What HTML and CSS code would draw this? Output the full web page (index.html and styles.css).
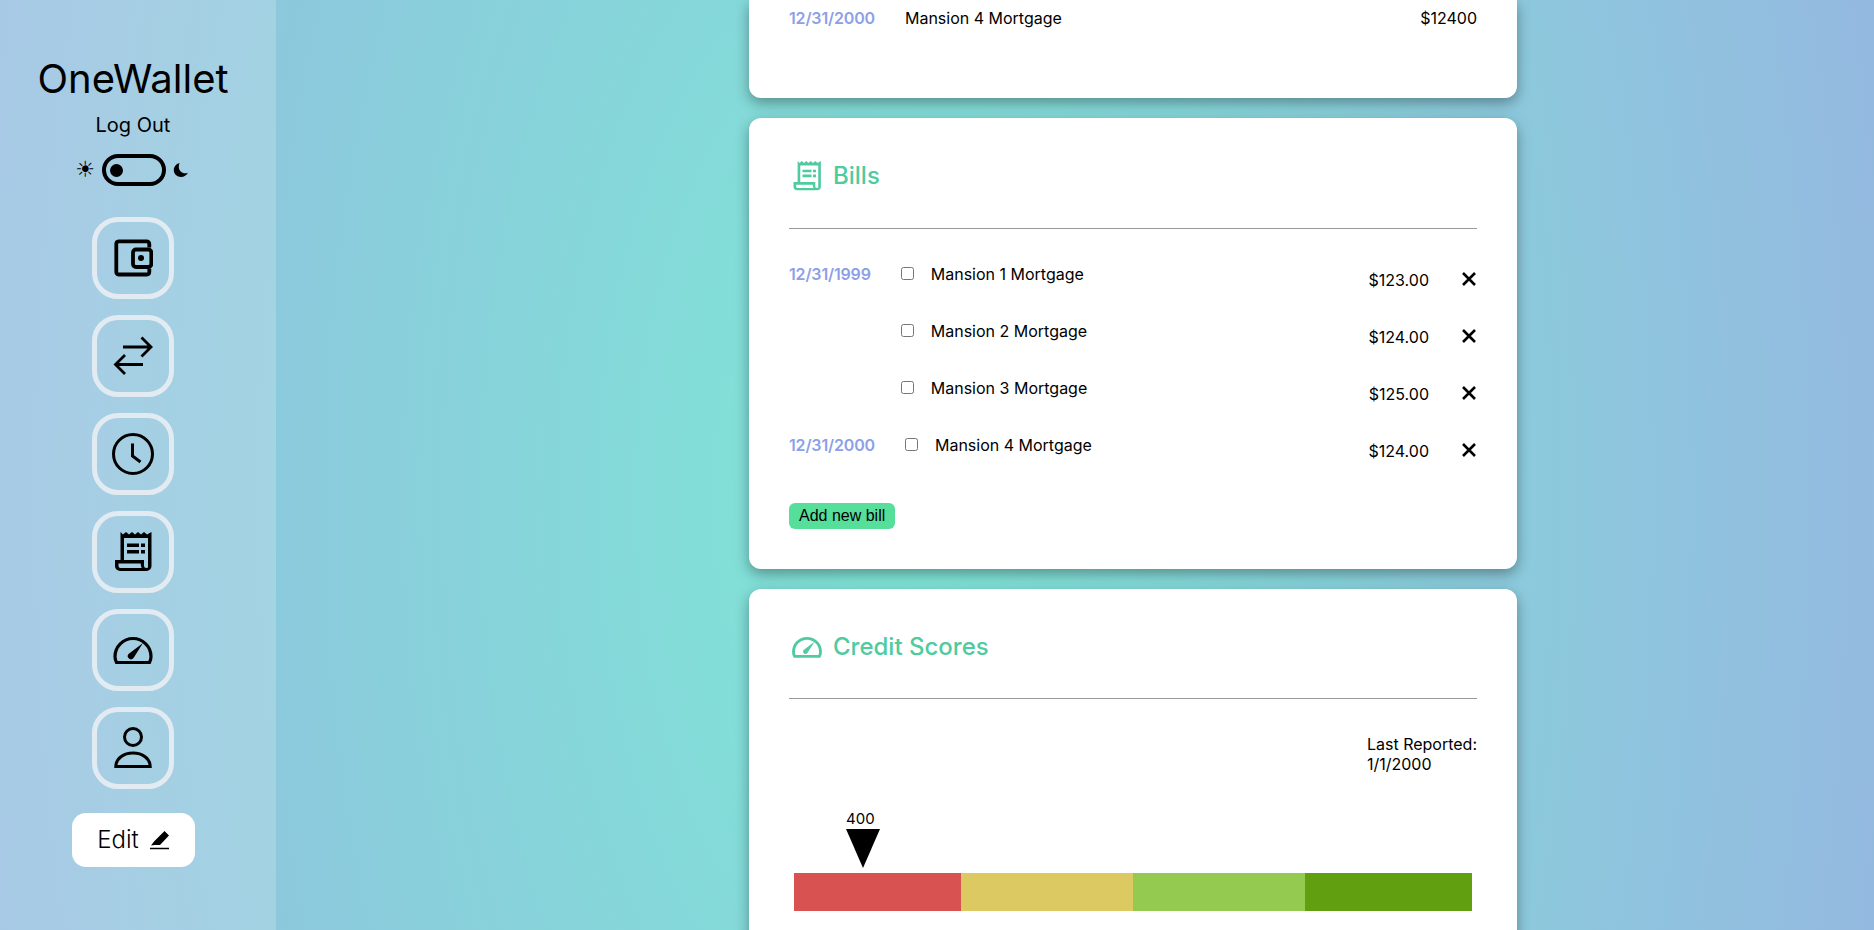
FILE: index.html
```html
<html>
<head>
	<title>OneWallet</title>
	<meta charset="UTF-8" />
	<link rel="stylesheet" href="styles.css">
</head>
<body>
<div class="page">
	<nav class="sidebar">
		<h1 class="logo">OneWallet</h1>
		<a class="logout" href="#">Log Out</a>
		<div class="theme">
			<span class="sun">☀</span>
			<span class="switch"><span class="knob"></span></span>
			<svg class="moon" width="16" height="16" viewBox="0 0 16 16"><path d="M6.5 1C3 2 .8 4.8.8 8c0 3.900 3.200 7 7.200 7 3 0 5.600-1.600 7-4.200-.9.4-1.800.5-2.700.5C8.800 11.300 5.800 8.600 5.800 5c0-1.500.2-2.800.7-4z"/></svg>
		</div>

		<a class="nav-btn" href="#">
			<svg width="40" height="40" viewBox="0 0 40 40" fill="none" stroke="#000" stroke-width="3.800"><path d="M36.300 9.500V6a2.600 2.600 0 0 0-2.600-2.600H5.700A2.600 2.600 0 0 0 3.300 6v28a2.600 2.600 0 0 0 2.400 2.500h28a2.600 2.600 0 0 0 2.600-2.500v-3.500"/><rect x="20" y="11.500" width="18.300" height="17.500" rx="3"/><circle cx="28" cy="20" r="3" fill="#000" stroke="none"/></svg>
		</a>
		<a class="nav-btn" href="#">
			<svg width="40" height="40" viewBox="0 0 40 40" fill="none" stroke="#000" stroke-width="2.800"><path d="M10 11H38M28.500 1.500L38 11L28.500 20.500"/><path d="M30 28.500H2.500M12 19L2.500 28.500L12 38"/></svg>
		</a>
		<a class="nav-btn" href="#">
			<svg width="42" height="42" viewBox="0 0 42 42" fill="none" stroke="#000" stroke-width="3"><circle cx="21" cy="21" r="19.500"/><path d="M20.500 10.500V23L28.500 29"/></svg>
		</a>
		<a class="nav-btn" href="#">
			<svg width="40" height="40" viewBox="0 0 40 40"><path fill-rule="evenodd" d="M7.500 28V0l2.500 2.500 3-2.500 3 2.500 3-2.500 3 2.500 3-2.500 3 2.500 3-2.500 3 2.500 4.500-2.500v34a5 5 0 0 1-5 5H7a5 5 0 0 1-5-5V28zM11 6v22h20v5.500a2.500 2.500 0 0 0 2.500 2.500 1.500 1.500 0 0 0 1.500-2V6zM5.500 31.500V34a2 2 0 0 0 2 2h21.300a5 5 0 0 1-1-3v-1.500z"/><path d="M14 11.500h12v3.500H14zM14 18h12v3.500H14zM28 11.500h4v3.500h-4zM28 18h4v3.500h-4z"/></svg>
		</a>
		<a class="nav-btn" href="#">
			<svg width="40" height="40" viewBox="0 0 40 40"><path fill="none" stroke="#000" stroke-width="3.200" d="M3.500 32.500C2.500 30.500 2 28.500 2 26.500a18 18 0 0 1 36 0c0 2-.5 4-1.500 6z"/><path d="M15.500 24l14.500-11-9.500 15a3.200 3.200 0 0 1-5-4z"/></svg>
		</a>
		<a class="nav-btn" href="#">
			<svg width="40" height="42" viewBox="0 0 40 42" fill="none" stroke="#000" stroke-width="3"><circle cx="20" cy="10" r="8.500"/><path d="M2.800 39.500H37.200C37 31.500 29.500 26 20 26S3 31.500 2.800 39.500z"/></svg>
		</a>

		<button class="edit-btn">Edit
			<svg width="20" height="20" viewBox="0 0 20 20"><path d="M15.500 1L20 5.500 11 15H5.500L2 15.500 5 11.500z"/><path d="M1 18.500h19" stroke="#000" stroke-width="1.500"/></svg>
		</button>
	</nav>

	<main class="content">
		<section class="card card-top">
			<div class="row-group">
				<span class="date">12/31/2000</span>
				<span class="top-name">Mansion 4 Mortgage</span>
				<span class="top-amount">$12400</span>
			</div>
		</section>

		<section class="card">
			<h2 class="card-title">
				<svg width="30" height="30" viewBox="0 0 40 40" fill="#4fcb9f"><path fill-rule="evenodd" d="M7.500 28V0l2.500 2.500 3-2.500 3 2.500 3-2.500 3 2.500 3-2.500 3 2.500 3-2.500 3 2.500 4.500-2.500v34a5 5 0 0 1-5 5H7a5 5 0 0 1-5-5V28zM11 6v22h20v5.500a2.500 2.500 0 0 0 2.500 2.500 1.500 1.500 0 0 0 1.500-2V6zM5.500 31.500V34a2 2 0 0 0 2 2h21.300a5 5 0 0 1-1-3v-1.500z"/><path d="M14 11.500h12v3.500H14zM14 18h12v3.500H14zM28 11.500h4v3.500h-4zM28 18h4v3.500h-4z"/></svg>
				Bills
			</h2>
			<hr class="rule">

			<div class="bill-group">
				<span class="date">12/31/1999</span>
				<div class="bill-rows">
					<div class="bill"><input type="checkbox"><span class="bill-name">Mansion 1 Mortgage</span><span class="bill-amount">$123.00</span><svg class="remove" width="16" height="16" viewBox="0 0 16 16"><path d="M2 2L14 14M14 2L2 14" stroke="#000" stroke-width="2.600"/></svg></div>
					<div class="bill"><input type="checkbox"><span class="bill-name">Mansion 2 Mortgage</span><span class="bill-amount">$124.00</span><svg class="remove" width="16" height="16" viewBox="0 0 16 16"><path d="M2 2L14 14M14 2L2 14" stroke="#000" stroke-width="2.600"/></svg></div>
					<div class="bill"><input type="checkbox"><span class="bill-name">Mansion 3 Mortgage</span><span class="bill-amount">$125.00</span><svg class="remove" width="16" height="16" viewBox="0 0 16 16"><path d="M2 2L14 14M14 2L2 14" stroke="#000" stroke-width="2.600"/></svg></div>
				</div>
			</div>
			<div class="bill-group">
				<span class="date">12/31/2000</span>
				<div class="bill-rows">
					<div class="bill"><input type="checkbox"><span class="bill-name">Mansion 4 Mortgage</span><span class="bill-amount">$124.00</span><svg class="remove" width="16" height="16" viewBox="0 0 16 16"><path d="M2 2L14 14M14 2L2 14" stroke="#000" stroke-width="2.600"/></svg></div>
				</div>
			</div>

			<button class="add-btn">Add new bill</button>
		</section>

		<section class="card card-scores">
			<h2 class="card-title">
				<svg width="30" height="30" viewBox="0 0 40 40" fill="#4fcb9f"><path fill="none" stroke="#4fcb9f" stroke-width="3.800" d="M3.500 32.500C2.500 30.500 2 28.500 2 26.500a18 18 0 0 1 36 0c0 2-.5 4-1.500 6z"/><path d="M15.500 24l14.500-11-9.500 15a3.200 3.200 0 0 1-5-4z"/></svg>
				Credit Scores
			</h2>
			<hr class="rule">

			<div class="reported">Last Reported:<br>1/1/2000</div>

			<div class="marker">
				<span class="marker-value">400</span>
				<svg class="marker-arrow" width="34" height="39" viewBox="0 0 34 39"><path d="M0 0H34L17 39z"/></svg>
			</div>
			<div class="score-bar">
				<span class="seg seg-red"></span>
				<span class="seg seg-yellow"></span>
				<span class="seg seg-light"></span>
				<span class="seg seg-dark"></span>
			</div>
		</section>
	</main>
</div>
</body>
</html>
```

FILE: styles.css
```css
html, body {
	margin: 0;
	height: 100%;
	overflow: hidden;
}

body {
	font: normal 16px/20px Inter, sans-serif;
	color: #000;
	background: radial-gradient(ellipse 1000px 1900px at 900px 500px, #7ee6d6, #94b9e0);
}

a {
	color: inherit;
	text-decoration: none;
}

.page {
	display: flex;
	height: 930px;
}

/* sidebar */
.sidebar {
	width: 266px;
	padding: 0 10px 0 0;
	flex: none;
	display: flex;
	flex-direction: column;
	align-items: center;
	background: rgba(255, 255, 255, .2);
}

.logo {
	margin: 55px 0 0 0;
	font-size: 40px;
	line-height: 48px;
	font-weight: 400;
}

.logout {
	margin-top: 10px;
	font-size: 20px;
	line-height: 24px;
}

.theme {
	margin: 17px 2px 0 0;
	height: 32px;
	display: flex;
	align-items: center;
	gap: 7px;
}

.sun {
	font: 22px/20px "DejaVu Sans", sans-serif;
}

.switch {
	width: 56px;
	height: 24px;
	border: 4px solid #000;
	border-radius: 16px;
	display: flex;
	align-items: center;
}

.knob {
	width: 13px;
	height: 13px;
	margin-left: 4px;
	border-radius: 50%;
	background: #000;
}

.nav-btn {
	width: 72px;
	height: 72px;
	margin-top: 16px;
	border: 5px solid #e3ebf2;
	border-radius: 26px;
	display: flex;
	align-items: center;
	justify-content: center;
}

.theme + .nav-btn {
	margin-top: 31px;
}

.edit-btn {
	margin-top: 24px;
	width: 123px;
	height: 54px;
	border: 0;
	border-radius: 14px;
	background: #fff;
	font: 24px/30px Inter, sans-serif;
	font-weight: 300;
	color: #000;
	display: flex;
	align-items: center;
	justify-content: center;
	gap: 10px;
}

/* cards */
.content {
	padding-left: 473px;
	width: 768px;
	flex: none;
}

.card {
	width: 688px;
	padding: 40px;
	margin-bottom: 20px;
	background: #fff;
	border-radius: 12px;
	box-shadow: 0 5px 14px rgba(0, 0, 0, .35);
}

.card-top {
	height: 90px;
	padding: 8px 40px 0;
	border-radius: 0 0 12px 12px;
	box-sizing: content-box;
}

.row-group {
	display: flex;
}

.date {
	font-weight: 600;
	letter-spacing: -.15px;
	color: #8c9fe8;
	margin-right: 30px;
	white-space: nowrap;
}

.top-name {
	flex: 1;
}

.card-title {
	margin: 1px 0 0;
	height: 34px;
	display: flex;
	align-items: center;
	gap: 11px;
	font-size: 24px;
	line-height: 34px;
	font-weight: 500;
	color: #4fcb9f;
}

.card-title svg {
	margin-left: 3px;
}

.rule {
	margin: 35px 0;
	height: 1px;
	border: 0;
	background: #999;
}

.card-scores .rule {
	margin-top: 34px;
}

.bill-group {
	display: flex;
}

.bill-rows {
	flex: 1;
	min-width: 0;
}

.bill {
	height: 57px;
	display: flex;
	align-items: flex-start;
}

.bill input {
	margin: 3px 0 0;
	flex: none;
}

.bill-name {
	flex: 1;
	margin-left: 17px;
}

.bill-amount {
	margin-top: 6px;
	margin-right: 32px;
}

.remove {
	margin-top: 7px;
}

.add-btn {
	display: block;
	margin-top: 11px;
	height: 26px;
	padding: 0 10px;
	border: 0;
	border-radius: 6px;
	background: #55df9b;
	color: #000;
	font: 16px/26px "Liberation Sans", sans-serif;
}

.card-scores {
	height: 500px;
}

.reported {
	margin-left: auto;
	width: fit-content;
	white-space: nowrap;
}

.marker {
	margin: 37px 0 0 57px;
	width: 34px;
}

.marker-value {
	display: block;
	font-size: 15px;
	line-height: 16px;
}

.marker-arrow {
	display: block;
	margin-top: 2px;
}

.score-bar {
	display: flex;
	margin: 5px 5px 0;
	height: 38px;
}

.seg {
	flex: 172;
}

.seg-red {
	flex: 167;
	background: #d95252;
}

.seg-yellow {
	background: #dcc962;
}

.seg-light {
	background: #95ca50;
}

.seg-dark {
	flex: 167;
	background: #629f10;
}
```
